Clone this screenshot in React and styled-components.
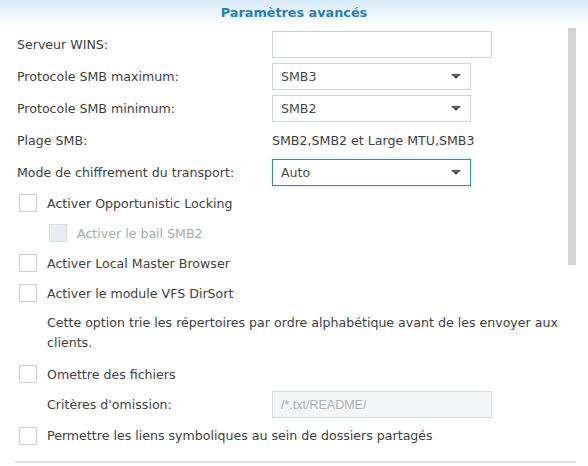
import React from "react";
import styled, { createGlobalStyle } from "styled-components";

const GlobalStyle = createGlobalStyle`
  body {
    margin: 0;
    background: #ffffff;
    font-family: "DejaVu Sans", Verdana, sans-serif;
  }
`;

const Panel = styled.div`
  width: 588px;
  height: 466px;
  overflow: hidden;
  background: #ffffff;
  font-size: 12.6px;
  color: #414141;
`;

const Header = styled.div`
  height: 25px;
  display: flex;
  align-items: center;
  justify-content: center;
  background: linear-gradient(#d8eaf8, #ffffff);
  color: #1f7fc2;
  font-weight: bold;
  font-size: 12.8px;
`;

const Body = styled.div`
  display: flex;
`;

const Form = styled.div`
  flex: 1;
  padding: 3px 0 0 17px;
`;

const ScrollTrack = styled.div`
  width: 8px;
  margin: 3px 12px 0 0;
`;

const ScrollThumb = styled.div`
  height: 237px;
  background: #d4d4d4;
`;

const FieldRow = styled.div`
  display: grid;
  grid-template-columns: ${(p) => (p.$indent ? "225px" : "255px")} auto;
  align-items: center;
  height: ${(p) => p.$h || 32}px;
  padding-left: ${(p) => (p.$indent ? 30 : 0)}px;
`;

const TextInput = styled.div`
  box-sizing: border-box;
  width: 220px;
  height: 27px;
  border: 1px solid ${(p) => (p.$disabled ? "#d3dbe2" : "#c9d3dc")};
  background: ${(p) => (p.$disabled ? "#f3f5f7" : "#ffffff")};
  color: #a9b0b6;
  display: flex;
  align-items: center;
  padding-left: 8px;
  font-family: "Liberation Sans", Arial, sans-serif;
  font-size: 12.5px;
`;

const Select = styled.div`
  box-sizing: border-box;
  width: 199px;
  height: 27px;
  border: 1px solid ${(p) => (p.$focused ? "#3b8a9c" : "#c9d3dc")};
  box-shadow: ${(p) => (p.$focused ? "0 0 3px 1px #d3f3fb" : "none")};
  display: flex;
  align-items: center;
  justify-content: space-between;
  padding: 0 9px 0 8px;
  color: #4a4a4a;
`;

const Arrow = styled.span`
  width: 0;
  height: 0;
  border-left: 5px solid transparent;
  border-right: 5px solid transparent;
  border-top: 5px solid #555555;
  margin-top: 1px;
`;

const CheckRow = styled.div`
  display: flex;
  align-items: center;
  height: ${(p) => p.$h || 30}px;
  padding-left: ${(p) => (p.$indent ? 32 : 2)}px;
  color: ${(p) => (p.$disabled ? "#a3abb3" : "#414141")};
`;

const Box = styled.span`
  box-sizing: border-box;
  width: 18px;
  height: 18px;
  border: 1px solid ${(p) => (p.$disabled ? "#d5dde5" : "#c9cfd5")};
  background: ${(p) => (p.$disabled ? "#e7edf3" : "#ffffff")};
  margin-right: 10px;
  flex-shrink: 0;
`;

const Note = styled.p`
  margin: 5px 0 6px 30px;
  line-height: 20px;
`;

const Footer = styled.div`
  margin: 10px 12px 0 15px;
  border-top: 2px solid #dde1e5;
`;

const Checkbox = ({ label, indent, disabled, h }) => (
  <CheckRow $indent={indent} $disabled={disabled} $h={h}>
    <Box $disabled={disabled} />
    {label}
  </CheckRow>
);

export default function App() {
  return (
    <>
      <GlobalStyle />
      <Panel>
        <Header>Paramètres avancés</Header>
        <Body>
          <Form>
            <FieldRow>
              <span>Serveur WINS:</span>
              <TextInput />
            </FieldRow>
            <FieldRow>
              <span>Protocole SMB maximum:</span>
              <Select>
                SMB3
                <Arrow />
              </Select>
            </FieldRow>
            <FieldRow>
              <span>Protocole SMB minimum:</span>
              <Select>
                SMB2
                <Arrow />
              </Select>
            </FieldRow>
            <FieldRow>
              <span>Plage SMB:</span>
              <span>SMB2,SMB2 et Large MTU,SMB3</span>
            </FieldRow>
            <FieldRow>
              <span>Mode de chiffrement du transport:</span>
              <Select $focused>
                Auto
                <Arrow />
              </Select>
            </FieldRow>
            <Checkbox label="Activer Opportunistic Locking" />
            <Checkbox label="Activer le bail SMB2" indent disabled />
            <Checkbox label="Activer Local Master Browser" />
            <Checkbox label="Activer le module VFS DirSort" />
            <Note>
              Cette option trie les répertoires par ordre alphabétique avant de les envoyer aux
              <br />
              clients.
            </Note>
            <Checkbox label="Omettre des fichiers" />
            <FieldRow $indent $h={31}>
              <span>Critères d'omission:</span>
              <TextInput $disabled>/*.txt/README/</TextInput>
            </FieldRow>
            <Checkbox label="Permettre les liens symboliques au sein de dossiers partagés" h={31} />
          </Form>
          <ScrollTrack>
            <ScrollThumb />
          </ScrollTrack>
        </Body>
        <Footer />
      </Panel>
    </>
  );
}
